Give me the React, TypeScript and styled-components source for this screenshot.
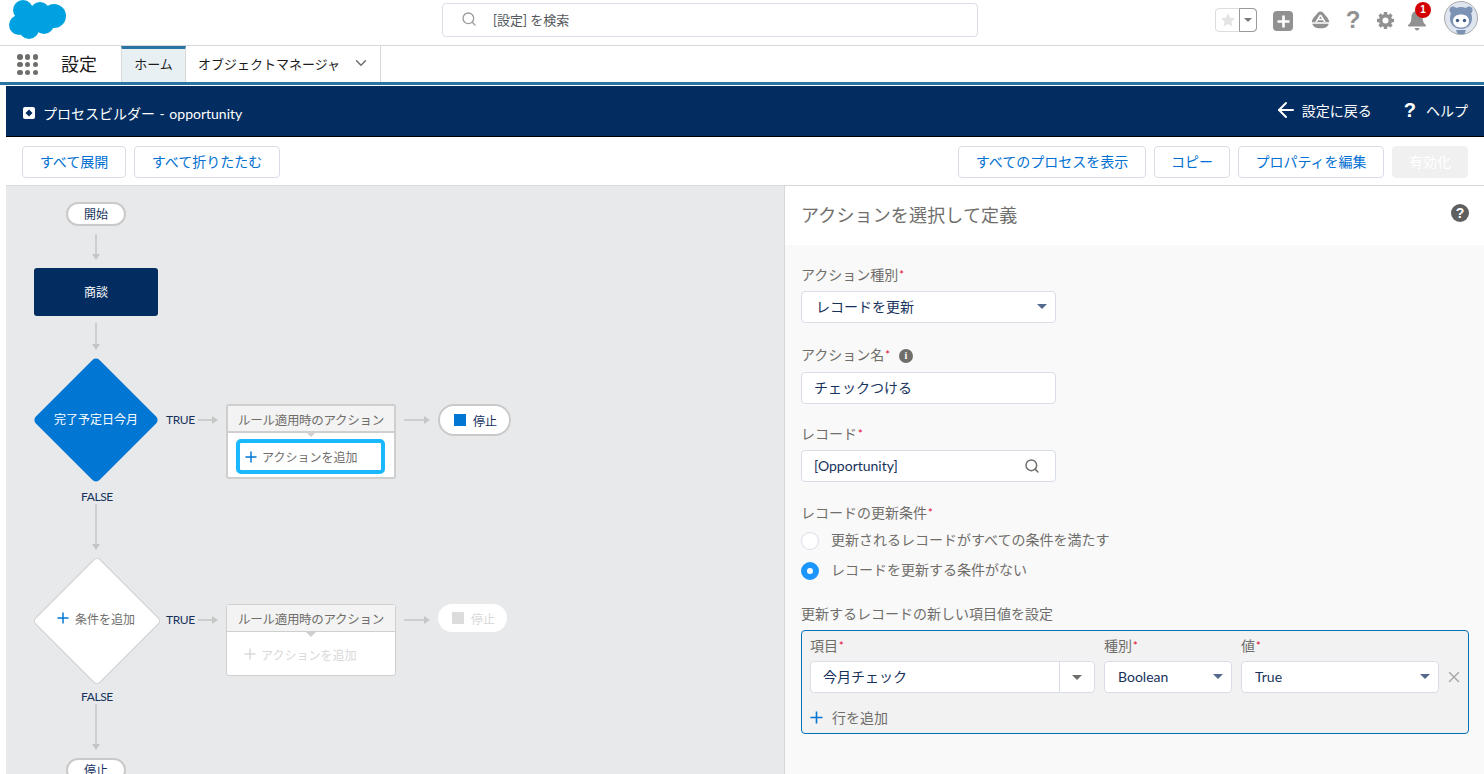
import React from "react";
import styled, { createGlobalStyle } from "styled-components";
import { Search, ChevronDown, ArrowLeft, X } from "lucide-react";

const FONT = `Lato, "Noto Sans CJK JP", "Noto Sans", sans-serif`;

const Global = createGlobalStyle`
  html, body { margin: 0; padding: 0; background: #fff; height: 774px; overflow: hidden; }
  body { font-family: ${FONT}; font-size: 14px; color: #16325c; }
  * { box-sizing: border-box; }
`;

const Page = styled.div`
  width: 1484px;
  height: 774px;
  display: flex;
  flex-direction: column;
  overflow: hidden;
  background: #fff;
`;

/* ---------- global header ---------- */
const TopBar = styled.header`
  height: 46px;
  flex: none;
  display: grid;
  grid-template-columns: 442px 536px 1fr;
  border-bottom: 1px solid #d8d8d8;
`;
const LogoCell = styled.div`
  padding-left: 9px;
  height: 45px;
`;
const SearchBox = styled.div`
  margin-top: 3px;
  height: 34px;
  border: 1px solid #d8dde6;
  border-radius: 4px;
  display: flex;
  align-items: center;
  padding: 0 0 2px 18px;
  gap: 16px;
  color: #54585c;
  font-size: 13px;
`;
const TopIcons = styled.div`
  display: flex;
  align-items: flex-start;
  padding: 8px 0 0 237px;
`;
const FavGroup = styled.div`
  width: 42px;
  height: 24px;
  border: 1px solid #dcdcdc;
  border-radius: 4px;
  display: flex;
`;
const FavStar = styled.div`
  width: 23px;
  display: flex;
  align-items: center;
  justify-content: center;
`;
const FavDrop = styled.div`
  flex: 1;
  margin: -1px -1px -1px 0;
  border: 1px solid #9a9a9a;
  border-radius: 0 4px 4px 0;
  display: flex;
  align-items: center;
  justify-content: center;
`;
const DownTri = styled.span<{ $color?: string; $w?: number }>`
  display: block;
  flex: none;
  width: 0;
  height: 0;
  border-left: ${(p) => p.$w ?? 5}px solid transparent;
  border-right: ${(p) => p.$w ?? 5}px solid transparent;
  border-top: ${(p) => p.$w ?? 5}px solid ${(p) => p.$color ?? "#54698d"};
`;
const HeadIcon = styled.div<{ $w: number; $ml: number; $mt?: number }>`
  width: ${(p) => p.$w}px;
  height: 24px;
  margin-left: ${(p) => p.$ml}px;
  margin-top: ${(p) => p.$mt ?? 0}px;
  position: relative;
  display: flex;
  align-items: center;
  justify-content: center;
  color: #919191;
`;
const HeadQuestion = styled.span`
  font: 700 24px/24px "Liberation Sans", sans-serif;
  color: #919191;
`;
const Badge = styled.span`
  position: absolute;
  left: 8px;
  top: -6px;
  width: 16px;
  height: 16px;
  border-radius: 50%;
  background: #d20000;
  color: #fff;
  font: 700 10px/16px "Liberation Sans", sans-serif;
  text-align: center;
`;
const PlusSquare = styled.div`
  width: 20px;
  height: 20px;
  border-radius: 4px;
  background: #919191;
  display: flex;
  align-items: center;
  justify-content: center;
`;
const Avatar = styled.div`
  width: 34px;
  height: 34px;
  margin-left: 17px;
  margin-top: -7px;
`;

/* ---------- app nav ---------- */
const NavBar = styled.nav`
  height: 39px;
  flex: none;
  display: flex;
  align-items: stretch;
  border-bottom: 3px solid #2a74a3;
`;
const AppLauncher = styled.div`
  width: 61px;
  padding: 8px 0 0 17px;
  display: grid;
  grid-template-columns: repeat(3, 5.5px);
  grid-template-rows: repeat(3, 5.5px);
  gap: 2.3px;
  align-content: start;
  & > i { background: #706e6b; border-radius: 50%; display: block; }
`;
const AppName = styled.div`
  width: 60px;
  font-size: 18px;
  line-height: 37px;
  color: #1a1a1a;
`;
const NavTab = styled.div<{ $active?: boolean }>`
  display: flex;
  align-items: center;
  height: 36px;
  font-size: 13px;
  white-space: nowrap;
  color: #1d1d1d;
  border-right: 1px solid #d8d8d8;
  ${(p) =>
    p.$active
      ? `width: 65px; justify-content:center; background:#e9f0f3; border-left:1px solid #d8d8d8; border-top:3px solid #2a74a3; padding-bottom:5px;`
      : `width: 195px; padding: 0 0 2px 12px; gap: 12px;`}
`;

/* ---------- process builder bar ---------- */
const Shell = styled.div`
  flex: 1;
  min-height: 0;
  margin-top: 1px;
  padding-left: 6px;
  display: flex;
  flex-direction: column;
`;
const TitleBar = styled.div`
  height: 51px;
  flex: none;
  background: #032d60;
  border-bottom: 1px solid #000;
  color: #fff;
  display: flex;
  align-items: center;
  padding: 3px 16px 0 17px;
`;
const TitleIcon = styled.div`
  width: 12px;
  height: 12px;
  margin-right: 8px;
  background: #fff;
  border-radius: 2px;
  display: flex;
  align-items: center;
  justify-content: center;
`;
const TitleText = styled.div`
  flex: 1;
  font-size: 14px;
  word-spacing: 1px;
`;
const TitleLink = styled.div<{ $ml: number }>`
  display: flex;
  align-items: center;
  margin-left: ${(p) => p.$ml}px;
  margin-top: -6px;
  font-size: 14px;
  gap: 4px;
`;
const QMark = styled.span`
  font: 700 20px/20px "Liberation Sans", sans-serif;
  color: #fff;
  margin-right: 6px;
`;

const ButtonRow = styled.div`
  height: 49px;
  flex: none;
  border-bottom: 1px solid #d8d8d8;
  display: flex;
  align-items: flex-start;
  padding: 9px 16px 0 16px;
  gap: 8px;
`;
const Btn = styled.button<{ $w: number; $disabled?: boolean }>`
  width: ${(p) => p.$w}px;
  height: 32px;
  padding: 0 0 2px;
  border-radius: 4px;
  border: 1px solid ${(p) => (p.$disabled ? "#f0f0f0" : "#d8dde6")};
  background: ${(p) => (p.$disabled ? "#f0f0f0" : "#fff")};
  color: ${(p) => (p.$disabled ? "#fff" : "#0070d2")};
  font: 400 14px ${FONT};
`;
const Spacer = styled.div`
  flex: 1;
`;

/* ---------- main split ---------- */
const Split = styled.div`
  flex: 1;
  min-height: 0;
  display: flex;
`;
const Canvas = styled.div`
  width: 778px;
  background: #e8e9eb;
  position: relative;
  overflow: hidden;
`;
const Pill = styled.div<{ $x: number; $y: number }>`
  position: absolute;
  left: ${(p) => p.$x}px;
  top: ${(p) => p.$y}px;
  width: 60px;
  height: 24px;
  border-radius: 12px;
  border: 2px solid #c9c9c9;
  background: #fff;
  font-size: 12px;
  line-height: 21px;
  text-align: center;
  color: #16325c;
`;
const ObjectNode = styled.div`
  position: absolute;
  left: 28px;
  top: 82px;
  width: 124px;
  height: 48px;
  border-radius: 3px;
  background: #032d60;
  color: #fff;
  font-size: 12px;
  padding-bottom: 1px;
  display: flex;
  align-items: center;
  justify-content: center;
`;
const Diamond = styled.div<{ $y: number; $ghost?: boolean }>`
  position: absolute;
  left: 28px;
  top: ${(p) => p.$y}px;
  width: 124px;
  height: 124px;
  display: flex;
  align-items: center;
  justify-content: center;
  font-size: 12px;
  color: ${(p) => (p.$ghost ? "#706e6b" : "#fff")};
  &::before {
    content: "";
    position: absolute;
    left: 17px;
    top: 17px;
    width: 90px;
    height: 90px;
    border-radius: 5px;
    transform: rotate(45deg);
    background: ${(p) => (p.$ghost ? "#fff" : "#0176d3")};
    border: ${(p) => (p.$ghost ? "1px solid #cfcfcf" : "none")};
  }
  & > span {
    position: relative;
    display: flex;
    align-items: center;
    gap: 6px;
    margin-top: -4px;
  }
`;
const EdgeLabel = styled.div<{ $x: number; $y: number }>`
  position: absolute;
  left: ${(p) => p.$x}px;
  top: ${(p) => p.$y}px;
  font-size: 12px;
  line-height: 14px;
  color: #16325c;
  letter-spacing: -0.4px;
`;
const Arrow = styled.svg<{ $x: number; $y: number }>`
  position: absolute;
  left: ${(p) => p.$x}px;
  top: ${(p) => p.$y}px;
  display: block;
`;
const ActionBox = styled.div<{ $y: number; $h: number; $ghost?: boolean }>`
  position: absolute;
  left: 220px;
  top: ${(p) => p.$y}px;
  width: 170px;
  height: ${(p) => p.$h}px;
  background: #fff;
  border: ${(p) => (p.$ghost ? 1 : 2)}px solid #cfcfcf;
  border-radius: 3px;
`;
const ActionHead = styled.div<{ $ghost?: boolean }>`
  height: 27px;
  background: #f3f3f3;
  border-bottom: ${(p) => (p.$ghost ? 1 : 2)}px solid #cfcfcf;
  color: #706e6b;
  font-size: 12.5px;
  letter-spacing: -0.3px;
  text-align: center;
  line-height: 30px;
  white-space: nowrap;
  position: relative;
  &::after {
    content: "";
    position: absolute;
    left: 50%;
    bottom: -6px;
    margin-left: -5px;
    width: 0;
    height: 0;
    border-left: 5px solid transparent;
    border-right: 5px solid transparent;
    border-top: 5px solid #cfcfcf;
  }
`;
const AddAction = styled.div<{ $focus?: boolean }>`
  margin: ${(p) => (p.$focus ? "6px 9px 0 8px" : "6px 9px 0")};
  height: ${(p) => (p.$focus ? 35 : 32)}px;
  border: ${(p) => (p.$focus ? "4px solid #1ab9ff" : "none")};
  border-radius: 5px;
  display: flex;
  align-items: center;
  padding-left: ${(p) => (p.$focus ? "5px" : "8px")};
  gap: 5px;
  font-size: 12px;
  color: ${(p) => (p.$focus ? "#706e6b" : "#d8d8d8")};
`;
const StopPill = styled.div<{ $y: number; $ghost?: boolean }>`
  position: absolute;
  left: 432px;
  top: ${(p) => p.$y}px;
  width: ${(p) => (p.$ghost ? 69 : 73)}px;
  height: ${(p) => (p.$ghost ? 28 : 32)}px;
  border-radius: 16px;
  background: #fff;
  border: ${(p) => (p.$ghost ? "none" : "2px solid #c9c9c9")};
  display: flex;
  align-items: center;
  padding-left: 14px;
  gap: 7px;
  font-size: 12px;
  color: ${(p) => (p.$ghost ? "#d8d8d8" : "#16325c")};
  & > i {
    display: block;
    width: 12px;
    height: 12px;
    background: ${(p) => (p.$ghost ? "#dcdcdc" : "#0176d3")};
  }
`;

/* ---------- right panel ---------- */
const Panel = styled.aside`
  flex: 1;
  min-width: 0;
  border-left: 1px solid #d8d8d8;
  background: #f9f9f9;
  display: flex;
  flex-direction: column;
`;
const PanelHead = styled.div`
  height: 59px;
  flex: none;
  background: #fff;
  display: flex;
  align-items: center;
  justify-content: space-between;
  padding: 0 15px 4px 16px;
  font-size: 18px;
  letter-spacing: 0.15px;
  color: #706e6b;
`;
const HelpDot = styled.span`
  width: 18px;
  height: 18px;
  border-radius: 50%;
  background: #5f5f5f;
  color: #fff;
  font: 700 14px/18px "Liberation Sans", sans-serif;
  text-align: center;
  display: block;
  margin-top: -2px;
`;
const InfoDot = styled.span`
  width: 14px;
  height: 14px;
  border-radius: 50%;
  background: #706e6b;
  color: #fff;
  font: 700 10px/14px "Liberation Serif", serif;
  text-align: center;
  display: block;
  margin-left: 9px;
  margin-top: 2px;
`;
const PanelBody = styled.div`
  padding: 20px 15px 0 16px;
  display: flex;
  flex-direction: column;
`;
const Field = styled.div<{ $mb: number }>`
  margin-bottom: ${(p) => p.$mb}px;
  width: 255px;
`;
const Label = styled.div<{ $mt?: number }>`
  font-size: 14px;
  line-height: 20px;
  margin-top: ${(p) => p.$mt ?? 0}px;
  color: #706e6b;
  display: flex;
  align-items: center;
  white-space: nowrap;
`;
const Req = styled.span`
  color: #e3002b;
  font-size: 11px;
  margin-left: 1px;
`;
const Control = styled.div<{ $pl?: number; $mt?: number }>`
  height: 32px;
  background: #fff;
  border: 1px solid #d8dde6;
  border-radius: 4px;
  display: flex;
  align-items: center;
  justify-content: space-between;
  padding: 0 8px 2px ${(p) => p.$pl ?? 12}px;
  font-size: 14px;
  color: #16325c;
  margin-top: ${(p) => p.$mt ?? 6}px;
`;
const LookupIcon = styled(Search)`
  margin-right: 7px;
  flex: none;
  margin-top: 2px;
`;
const RadioGroup = styled.div`
  margin-top: 1px;
`;
const RadioRow = styled.div`
  display: flex;
  align-items: center;
  gap: 12px;
  height: 30px;
  color: #706e6b;
  white-space: nowrap;
`;
const Radio = styled.span<{ $on?: boolean }>`
  width: 18px;
  height: 18px;
  border-radius: 50%;
  flex: none;
  margin-top: 3px;
  background: #fff;
  border: ${(p) => (p.$on ? "6px solid #1b96ff" : "1px solid #d8dde6")};
`;
const MapBox = styled.div`
  width: 668px;
  height: 104px;
  margin-top: 6px;
  border: 1px solid #0070b8;
  border-radius: 4px;
  background: #f2f2f2;
  padding: 5px 8px 0 8px;
`;
const MapGrid = styled.div`
  display: grid;
  grid-template-columns: 285px 128px 198px 1fr;
  column-gap: 9px;
  grid-template-rows: 20px 32px;
  row-gap: 5px;
`;
const MapControl = styled(Control)`
  margin-top: 0;
  padding-left: 13px;
`;
const ComboControl = styled(MapControl)`
  padding-left: 12px;
`;
const MapComboRight = styled.div`
  width: 35px;
  align-self: stretch;
  border-left: 1px solid #d8dde6;
  margin: 0 -8px -2px 0;
  display: flex;
  align-items: center;
  justify-content: center;
`;
const Remove = styled.div`
  display: flex;
  align-items: center;
  justify-content: flex-start;
  color: #a8a8a8;
  margin-left: -3px;
`;
const AddRow = styled.div`
  display: flex;
  align-items: center;
  gap: 9px;
  margin-top: 14px;
  color: #706e6b;
  font-size: 14px;
`;
const PlusSvg = styled.svg`
  flex: none;
  display: block;
`;

const Plus = ({ size = 13, color = "#0176d3", w = 1.6 }: { size?: number; color?: string; w?: number }) => (
  <PlusSvg width={size} height={size} viewBox="0 0 13 13">
    <path d="M6.5 0.5v12M0.5 6.5h12" stroke={color} strokeWidth={w} fill="none" />
  </PlusSvg>
);

const VArrow = ({ x, y, h }: { x: number; y: number; h: number }) => (
  <Arrow $x={x} $y={y} width={10} height={h} viewBox={`0 0 10 ${h}`}>
    <path d={`M5 0V${h - 4}`} stroke="#c6c6c6" strokeWidth="1.6" />
    <path d={`M1 ${h - 6}H9L5 ${h}Z`} fill="#c6c6c6" />
  </Arrow>
);
const HArrow = ({ x, y, w }: { x: number; y: number; w: number }) => (
  <Arrow $x={x} $y={y} width={w} height={10} viewBox={`0 0 ${w} 10`}>
    <path d={`M0 5H${w - 4}`} stroke="#c6c6c6" strokeWidth="1.6" />
    <path d={`M${w - 6} 1V9L${w} 5Z`} fill="#c6c6c6" />
  </Arrow>
);

const Cloud = () => (
  <svg width="58" height="41" viewBox="0 0 58 41">
    <g fill="#00a1e0">
      <circle cx="14" cy="10" r="10" />
      <circle cx="31" cy="12" r="10" />
      <circle cx="45" cy="16" r="12" />
      <circle cx="35" cy="24" r="10" />
      <circle cx="20" cy="29" r="10" />
      <circle cx="10" cy="25" r="10" />
      <rect x="10" y="10" width="32" height="18" />
    </g>
  </svg>
);

const Trail = () => (
  <svg width="19" height="18" viewBox="0 0 19 18">
    <path
      d="M9.5 0.5C7 0.5 6.5 2.5 4.5 4.5C2.5 6.5 0.8 9 0.8 11.2H18.2C18.2 9 16.5 6.5 14.5 4.5C12.5 2.5 12 0.5 9.5 0.5Z"
      fill="#919191"
    />
    <path d="M1.2 12.8H17.8C17 15.5 14.5 17.2 12 17.2H7C4.5 17.2 2 15.5 1.2 12.8Z" fill="#919191" />
    <path d="M9.5 4L5 11.2M9.5 4L14 11.2M7 8.4H12" stroke="#fff" strokeWidth="1.5" fill="none" />
  </svg>
);

const Gear = () => (
  <svg width="19" height="19" viewBox="0 0 19 19">
    <g stroke="#919191" strokeWidth="3.4">
      <path d="M9.5 1V18M1 9.5H18M3.5 3.5L15.5 15.5M15.5 3.5L3.5 15.5" />
    </g>
    <circle cx="9.5" cy="9.5" r="6.6" fill="#919191" />
    <circle cx="9.5" cy="9.5" r="3" fill="#fff" />
  </svg>
);

const BellIcon = () => (
  <svg width="20" height="21" viewBox="0 0 20 21">
    <path
      d="M10 1C6.2 1 4.4 4 4.4 7.5C4.4 11 3.6 13 1.2 15C0.6 15.6 1 16.5 1.8 16.5H18.2C19 16.5 19.4 15.6 18.8 15C16.4 13 15.6 11 15.6 7.5C15.6 4 13.8 1 10 1Z"
      fill="#919191"
    />
    <path d="M7.6 18H12.4C12.2 19.5 11.2 20.4 10 20.4C8.8 20.4 7.8 19.5 7.6 18Z" fill="#919191" />
  </svg>
);

const Astro = () => (
  <svg width="34" height="34" viewBox="0 0 34 34">
    <circle cx="17" cy="17" r="16.5" fill="#dfe5ee" stroke="#a9a9a9" />
    <circle cx="9" cy="9" r="3.5" fill="#7d93b5" />
    <circle cx="25" cy="9" r="3.5" fill="#7d93b5" />
    <path d="M17 6C24 6 28 11 28 17C28 24 23 28 17 28C11 28 6 24 6 17C6 11 10 6 17 6Z" fill="#7d93b5" />
    <path d="M9 20C9 15.5 13 13.5 17 13.5C21 13.5 25 15.5 25 20C25 24.5 21 26.5 17 26.5C13 26.5 9 24.5 9 20Z" fill="#fff" />
    <circle cx="13.5" cy="19.5" r="1.7" fill="#3f5a85" />
    <circle cx="20.5" cy="19.5" r="1.7" fill="#3f5a85" />
    <path d="M12 29H22L20.5 33H13.5Z" fill="#7d93b5" />
  </svg>
);

export default function App() {
  return (
    <Page>
      <Global />
      <TopBar>
        <LogoCell>
          <Cloud />
        </LogoCell>
        <SearchBox>
          <Search size={16} color="#9b9b9b" strokeWidth={2} />
          <span>[設定] を検索</span>
        </SearchBox>
        <TopIcons>
          <FavGroup>
            <FavStar>
              <svg width="16" height="16" viewBox="0 0 24 24">
                <path d="M12 1.5l3.2 7 7.6.8-5.7 5.1 1.6 7.5L12 18l-6.7 3.9 1.6-7.5L1.2 9.3l7.6-.8z" fill="#e4e4e4" />
              </svg>
            </FavStar>
            <FavDrop>
              <DownTri $color="#7a7a7a" $w={4.5} />
            </FavDrop>
          </FavGroup>
          <HeadIcon $w={20} $ml={16} $mt={1}>
            <PlusSquare>
              <Plus size={13} color="#fff" w={2.6} />
            </PlusSquare>
          </HeadIcon>
          <HeadIcon $w={19} $ml={18} $mt={0}>
            <Trail />
          </HeadIcon>
          <HeadIcon $w={18} $ml={14} $mt={0}>
            <HeadQuestion>?</HeadQuestion>
          </HeadIcon>
          <HeadIcon $w={20} $ml={13} $mt={0}>
            <Gear />
          </HeadIcon>
          <HeadIcon $w={20} $ml={12} $mt={0}>
            <BellIcon />
            <Badge>1</Badge>
          </HeadIcon>
          <Avatar>
            <Astro />
          </Avatar>
        </TopIcons>
      </TopBar>

      <NavBar>
        <AppLauncher>
          {Array.from({ length: 9 }).map((_, i) => (
            <i key={i} />
          ))}
        </AppLauncher>
        <AppName>設定</AppName>
        <NavTab $active>ホーム</NavTab>
        <NavTab>
          オブジェクトマネージャ
          <ChevronDown size={18} color="#706e6b" />
        </NavTab>
      </NavBar>

      <Shell>
        <TitleBar>
          <TitleIcon>
            <svg width="8" height="8" viewBox="0 0 8 8">
              <path d="M4 0.5L7.5 4 4 7.5 0.5 4Z" fill="#032d60" />
            </svg>
          </TitleIcon>
          <TitleText>プロセスビルダー - opportunity</TitleText>
          <TitleLink $ml={0}>
            <ArrowLeft size={24} color="#fff" strokeWidth={2} />
            設定に戻る
          </TitleLink>
          <TitleLink $ml={32}>
            <QMark>?</QMark>
            ヘルプ
          </TitleLink>
        </TitleBar>

        <ButtonRow>
          <Btn $w={104}>すべて展開</Btn>
          <Btn $w={146}>すべて折りたたむ</Btn>
          <Spacer />
          <Btn $w={188}>すべてのプロセスを表示</Btn>
          <Btn $w={76}>コピー</Btn>
          <Btn $w={146}>プロパティを編集</Btn>
          <Btn $w={76} $disabled>
            有効化
          </Btn>
        </ButtonRow>

        <Split>
          <Canvas>
            <Pill $x={60} $y={16}>開始</Pill>
            <VArrow x={85} y={48} h={26} />
            <ObjectNode>商談</ObjectNode>
            <VArrow x={85} y={137} h={27} />
            <Diamond $y={172}>
              <span>完了予定日今月</span>
            </Diamond>
            <EdgeLabel $x={160} $y={227}>TRUE</EdgeLabel>
            <HArrow x={192} y={229} w={20} />
            <ActionBox $y={218} $h={75}>
              <ActionHead>ルール適用時のアクション</ActionHead>
              <AddAction $focus>
                <Plus size={12} />
                アクションを追加
              </AddAction>
            </ActionBox>
            <HArrow x={398} y={229} w={26} />
            <StopPill $y={218}>
              <i />
              停止
            </StopPill>
            <EdgeLabel $x={75} $y={304}>FALSE</EdgeLabel>
            <VArrow x={85} y={318} h={46} />
            <Diamond $y={372} $ghost>
              <span>
                <Plus size={12} />
                条件を追加
              </span>
            </Diamond>
            <EdgeLabel $x={160} $y={427}>TRUE</EdgeLabel>
            <HArrow x={192} y={429} w={20} />
            <ActionBox $y={418} $h={72} $ghost>
              <ActionHead $ghost>ルール適用時のアクション</ActionHead>
              <AddAction>
                <Plus size={12} color="#d8d8d8" />
                アクションを追加
              </AddAction>
            </ActionBox>
            <HArrow x={398} y={429} w={26} />
            <StopPill $y={418} $ghost>
              <i />
              停止
            </StopPill>
            <EdgeLabel $x={75} $y={504}>FALSE</EdgeLabel>
            <VArrow x={85} y={518} h={46} />
            <Pill $x={60} $y={572}>停止</Pill>
          </Canvas>

          <Panel>
            <PanelHead>
              アクションを選択して定義
              <HelpDot>?</HelpDot>
            </PanelHead>
            <PanelBody>
              <Field $mb={22}>
                <Label>アクション種別<Req>*</Req></Label>
                <Control $pl={14}>
                  レコードを更新
                  <DownTri />
                </Control>
              </Field>
              <Field $mb={20}>
                <Label>
                  アクション名<Req>*</Req>
                  <InfoDot>i</InfoDot>
                </Label>
                <Control $mt={7}>チェックつける</Control>
              </Field>
              <Field $mb={21}>
                <Label>レコード<Req>*</Req></Label>
                <Control>
                  [Opportunity]
                  <LookupIcon size={16} color="#706e6b" strokeWidth={2.2} />
                </Control>
              </Field>
              <Label>レコードの更新条件<Req>*</Req></Label>
              <RadioGroup>
                <RadioRow>
                  <Radio />
                  更新されるレコードがすべての条件を満たす
                </RadioRow>
                <RadioRow>
                  <Radio $on />
                  レコードを更新する条件がない
                </RadioRow>
              </RadioGroup>
              <Label $mt={20}>更新するレコードの新しい項目値を設定</Label>
              <MapBox>
                <MapGrid>
                  <Label>項目<Req>*</Req></Label>
                  <Label>種別<Req>*</Req></Label>
                  <Label>値<Req>*</Req></Label>
                  <span />
                  <ComboControl>
                    今月チェック
                    <MapComboRight>
                      <DownTri $color="#706e6b" />
                    </MapComboRight>
                  </ComboControl>
                  <MapControl>
                    Boolean
                    <DownTri />
                  </MapControl>
                  <MapControl>
                    True
                    <DownTri />
                  </MapControl>
                  <Remove>
                    <X size={18} />
                  </Remove>
                </MapGrid>
                <AddRow>
                  <Plus size={13} />
                  行を追加
                </AddRow>
              </MapBox>
            </PanelBody>
          </Panel>
        </Split>
      </Shell>
    </Page>
  );
}
